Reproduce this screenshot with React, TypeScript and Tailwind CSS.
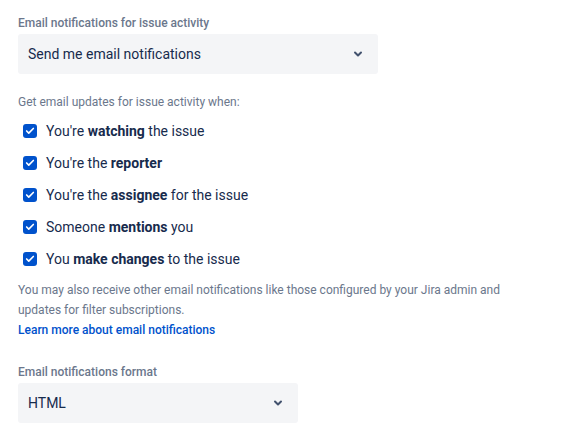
import { Check, ChevronDown } from 'lucide-react'

const options = [
  { pre: "You're ", bold: 'watching', post: ' the issue' },
  { pre: "You're the ", bold: 'reporter', post: '' },
  { pre: "You're the ", bold: 'assignee', post: ' for the issue' },
  { pre: 'Someone ', bold: 'mentions', post: ' you' },
  { pre: 'You ', bold: 'make changes', post: ' to the issue' },
]

function Select({ value, width }: { value: string; width: string }) {
  return (
    <div className={`${width} h-10 rounded-[3px] bg-[#f4f5f7] flex items-center justify-between pl-[10px] pr-[14px]`}>
      <span className="text-[14px] text-[#172b4d]">{value}</span>
      <ChevronDown className="w-[12px] h-[12px] text-[#42526e]" strokeWidth={4} />
    </div>
  )
}

export default function App() {
  return (
    <div
      className="w-[586px] h-[445px] bg-white px-[18px] pt-[14px]"
      style={{ fontFamily: 'Roboto, sans-serif' }}
    >
      <div className="text-[12px] font-medium text-[#6b778c] leading-[18px]">
        Email notifications for issue activity
      </div>
      <div className="mt-[2px]">
        <Select value="Send me email notifications" width="w-[360px]" />
      </div>

      <div className="mt-[19px] text-[12px] text-[#6b778c] leading-[18px]">
        Get email updates for issue activity when:
      </div>
      <div className="mt-[4px] flex flex-col">
        {options.map((o) => (
          <label key={o.bold} className="h-8 flex items-center gap-[9px] pl-[5px]">
            <span className="w-[14px] h-[14px] rounded-[3px] bg-[#0052cc] flex items-center justify-center">
              <Check className="w-[10px] h-[10px] text-white" strokeWidth={4} />
            </span>
            <span className="text-[14px] text-[#172b4d]">
              {o.pre}
              <b className="font-bold">{o.bold}</b>
              {o.post}
            </span>
          </label>
        ))}
      </div>

      <p className="mt-[5px] text-[12px] leading-[20px] text-[#6b778c]">
        You may also receive other email notifications like those configured by your Jira admin and
        <br />
        updates for filter subscriptions.
      </p>
      <a href="#" className="block text-[12px] leading-[20px] font-medium text-[#0052cc]">
        Learn more about email notifications
      </a>

      <div className="mt-[23px] text-[12px] font-medium text-[#6b778c] leading-[18px]">
        Email notifications format
      </div>
      <div className="mt-[2px]">
        <Select value="HTML" width="w-[280px]" />
      </div>
    </div>
  )
}
